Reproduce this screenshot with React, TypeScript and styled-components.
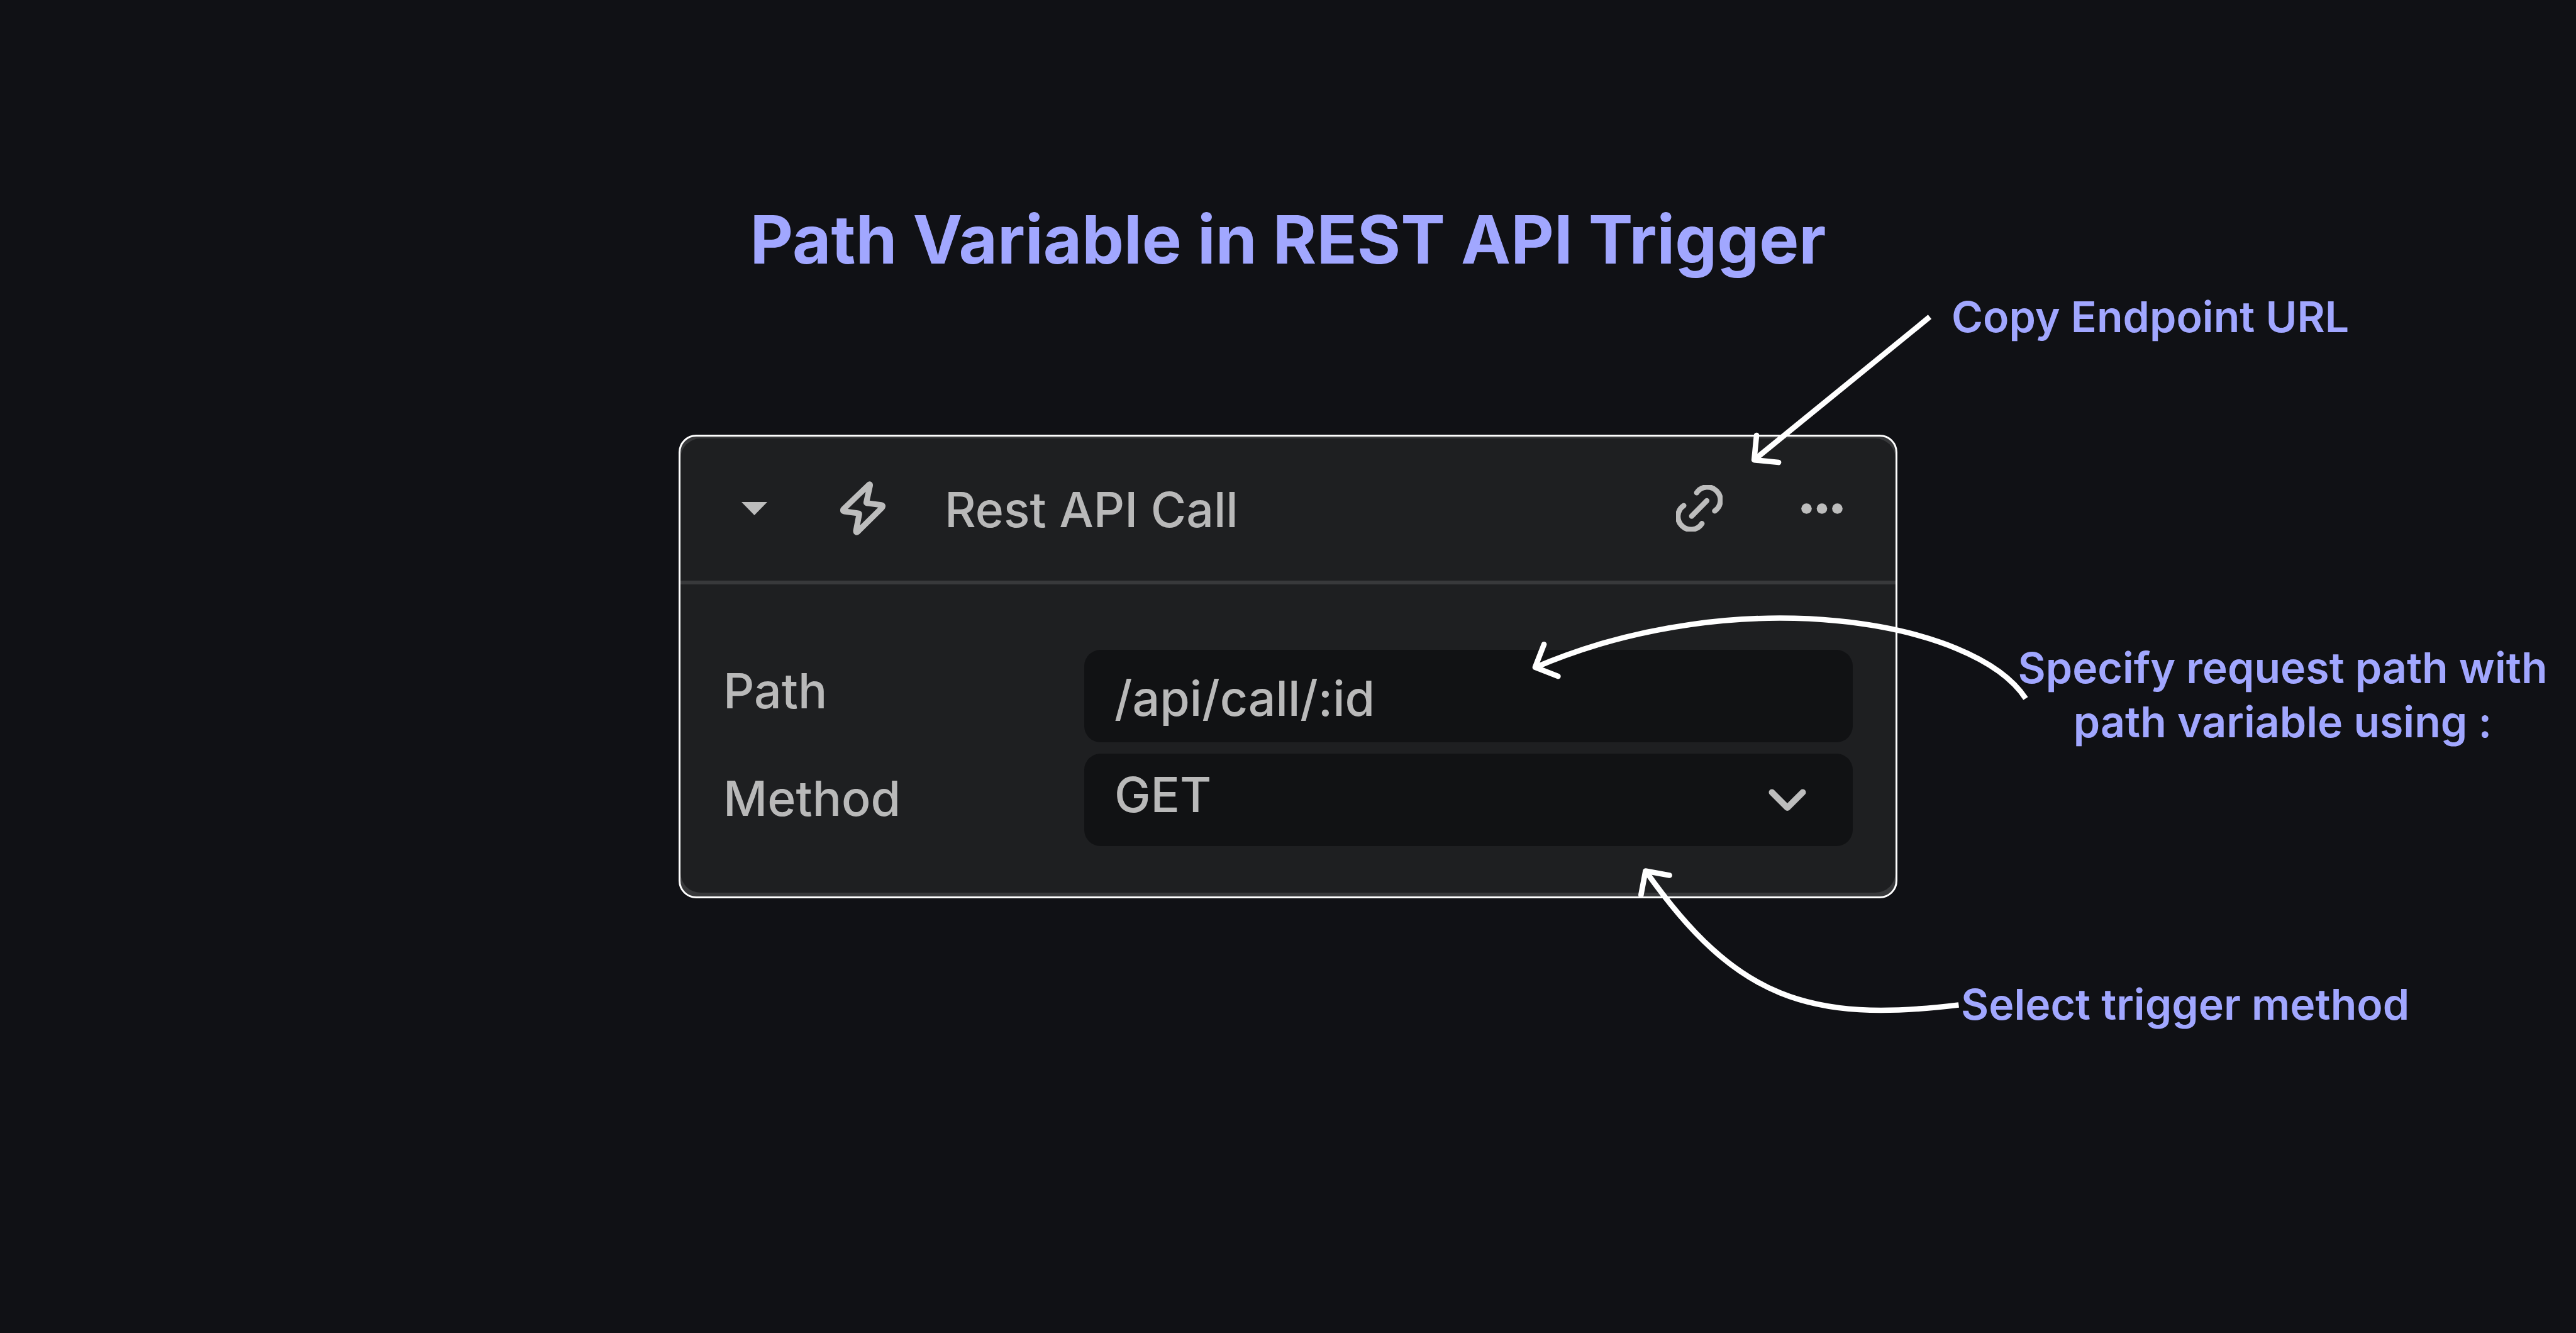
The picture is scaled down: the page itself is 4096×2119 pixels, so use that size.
import React, { useState } from "react";
import styled, { createGlobalStyle } from "styled-components";

const color = {
  page: "#101115",
  panel: "#1e1f21",
  field: "#111214",
  line: "#38393b",
  text: "#b9b9b9",
  icon: "#bdbdbd",
  accent: "#a1a7ff",
};

const GlobalStyle = createGlobalStyle`
  *, *::before, *::after { box-sizing: border-box; }
  body {
    margin: 0;
    background: ${color.page};
    font-family: Inter, "Liberation Sans", sans-serif;
  }
`;

const Page = styled.main`
  position: relative;
  min-height: 100vh;
  padding-top: 309px;
  overflow: hidden;
  background: ${color.page};
`;

const Title = styled.h1`
  margin: 0;
  color: ${color.accent};
  font-size: 106px;
  font-weight: 700;
  line-height: 144px;
  text-align: center;
`;

const Columns = styled.div`
  display: grid;
  grid-template-columns: 1079fr 1938fr 1079fr;
  align-items: start;
`;

const Card = styled.section`
  grid-column: 2;
  margin-top: 238px;
  overflow: hidden;
  border: 3px solid #fff;
  border-radius: 28px;
  background: ${color.line};
`;

const Panel = styled.div`
  margin: 3px 0 6px;
  border-radius: 32px;
  background: ${color.panel};
`;

const Header = styled.header`
  display: flex;
  align-items: center;
  height: 232px;
  padding: 0 68px;
  border-bottom: 6px solid ${color.line};
`;

const IconButton = styled.button<{ $width: number }>`
  display: flex;
  align-items: center;
  justify-content: center;
  width: ${(p) => p.$width}px;
  height: 100px;
  padding: 0 0 4px;
  border: 0;
  background: none;
  color: ${color.icon};
`;

const TypeIcon = styled.span`
  display: flex;
  margin-left: 88px;
  padding-bottom: 4px;
  color: ${color.icon};
`;

const Name = styled.h2`
  flex: 1;
  margin: 0 0 0 94px;
  color: ${color.text};
  font-size: 77px;
  font-weight: 500;
  line-height: 92px;
`;

const Actions = styled.div`
  display: flex;
  gap: 94px;
`;

const Form = styled.form`
  display: flex;
  padding: 104px 68px 74px;
`;

const Labels = styled.div`
  display: flex;
  flex: 0 0 574px;
  flex-direction: column;
  gap: 79px;
  padding-top: 19px;
`;

const Label = styled.label`
  color: ${color.text};
  font-size: 77px;
  font-weight: 500;
  line-height: 92px;
`;

const Fields = styled.div`
  display: flex;
  flex: 1;
  flex-direction: column;
  gap: 18px;
  min-width: 0;
`;

const TextField = styled.input`
  width: 100%;
  height: 147px;
  padding: 6px 48px 0;
  border: 0;
  border-radius: 26px;
  outline: 0;
  background: ${color.field};
  color: ${color.text};
  font: 500 77px/92px Inter, "Liberation Sans", sans-serif;
`;

const SelectBox = styled.div`
  position: relative;
`;

const Select = styled.select`
  display: block;
  width: 100%;
  height: 147px;
  padding: 0 48px 18px;
  border: 0;
  border-radius: 26px;
  outline: 0;
  appearance: none;
  background: ${color.field};
  color: ${color.text};
  font: 500 77px/92px Inter, "Liberation Sans", sans-serif;
`;

const Chevron = styled.svg`
  position: absolute;
  top: 56px;
  right: 74px;
  pointer-events: none;
`;

const Notes = styled.div`
  display: flex;
  grid-column: 3;
  flex-direction: column;
  padding-top: 7px;
`;

const Note = styled.p<{ $before?: number; $indent: number; $centered?: boolean }>`
  margin: ${(p) => p.$before ?? 0}px 0 0;
  padding-left: ${(p) => p.$indent}px;
  color: ${color.accent};
  font-size: 68px;
  font-weight: 600;
  line-height: 86px;
  text-align: ${(p) => (p.$centered ? "center" : "left")};
  white-space: nowrap;
`;

const Arrows = styled.svg`
  position: absolute;
  top: 0;
  left: 0;
  width: 100%;
  height: auto;
  pointer-events: none;
`;

const Caret = () => (
  <svg width="41" height="21" viewBox="0 0 41 21" aria-hidden="true">
    <path d="M0 0H41L20.5 21Z" fill="currentColor" />
  </svg>
);

const Bolt = () => (
  <svg width="72" height="86" viewBox="714 126 298 354" aria-hidden="true">
    <path
      d="M904 147Q912 143 910 154L886 264Q885 269 890 269L984 281Q1000 284 988 300L829 457Q817 466 818 450L839 343Q840 336 834 336L740 323Q726 319 738 306Z"
      fill="none"
      stroke="currentColor"
      strokeWidth="38"
      strokeLinejoin="round"
    />
  </svg>
);

const LinkIcon = () => (
  <svg width="74" height="74" viewBox="159 90 307 307" aria-hidden="true">
    <path
      d="M295 141A86 86 0 1 1 414 261M210 226A86 86 0 1 0 330 344M262 295L362 194"
      fill="none"
      stroke="currentColor"
      strokeWidth="35"
      strokeLinecap="round"
    />
  </svg>
);

const Dots = () => (
  <svg width="66" height="17" viewBox="0 0 66 17" aria-hidden="true">
    <g fill="currentColor">
      <circle cx="8.5" cy="8.5" r="8.3" />
      <circle cx="33" cy="8.5" r="8.3" />
      <circle cx="57.5" cy="8.5" r="8.3" />
    </g>
  </svg>
);

export default function App() {
  const [path, setPath] = useState("/api/call/:id");
  const [method, setMethod] = useState("GET");

  return (
    <>
      <GlobalStyle />
      <Page>
        <Title>Path Variable in REST API Trigger</Title>
        <Columns>
          <Card>
            <Panel>
              <Header>
                <IconButton type="button" aria-label="Collapse" $width={98}>
                  <Caret />
                </IconButton>
                <TypeIcon>
                  <Bolt />
                </TypeIcon>
                <Name>Rest API Call</Name>
                <Actions>
                  <IconButton type="button" aria-label="Copy endpoint URL" $width={104}>
                    <LinkIcon />
                  </IconButton>
                  <IconButton type="button" aria-label="More options" $width={98}>
                    <Dots />
                  </IconButton>
                </Actions>
              </Header>
              <Form onSubmit={(e) => e.preventDefault()}>
                <Labels>
                  <Label htmlFor="path">Path</Label>
                  <Label htmlFor="method">Method</Label>
                </Labels>
                <Fields>
                  <TextField
                    id="path"
                    type="text"
                    value={path}
                    onChange={(e) => setPath(e.target.value)}
                  />
                  <SelectBox>
                    <Select id="method" value={method} onChange={(e) => setMethod(e.target.value)}>
                      <option>GET</option>
                      <option>POST</option>
                      <option>PUT</option>
                      <option>DELETE</option>
                    </Select>
                    <Chevron width="60" height="37" viewBox="0 0 60 37" aria-hidden="true">
                      <path
                        d="M5.5 5.5L30 30L54.5 5.5"
                        fill="none"
                        stroke={color.icon}
                        strokeWidth="10"
                        strokeLinecap="round"
                        strokeLinejoin="round"
                      />
                    </Chevron>
                  </SelectBox>
                </Fields>
              </Form>
            </Panel>
          </Card>
          <Notes>
            <Note $indent={86}>Copy Endpoint URL</Note>
            <Note $before={472} $indent={146} $centered>
              Specify request path with
              <br />
              path variable using :
            </Note>
            <Note $before={363} $indent={101}>
              Select trigger method
            </Note>
          </Notes>
        </Columns>
        <Arrows viewBox="0 0 5692 2944" aria-hidden="true">
          <g fill="none" stroke="#fff" strokeWidth="12" strokeLinejoin="round">
            <path d="M4264 700L3877 1015" />
            <path d="M3881.3 961.7L3876 1016L3930 1021.5" strokeLinecap="round" />
            <path d="M4476 1543C4364 1370 3842 1282 3393 1474" />
            <path d="M3411.7 1423.3L3392 1474L3442.7 1494" strokeLinecap="round" />
            <path d="M4328 2220C3998 2260 3836 2207 3637 1925" />
            <path d="M3626 1977L3636 1924L3689 1933.7" strokeLinecap="round" />
          </g>
        </Arrows>
      </Page>
    </>
  );
}
